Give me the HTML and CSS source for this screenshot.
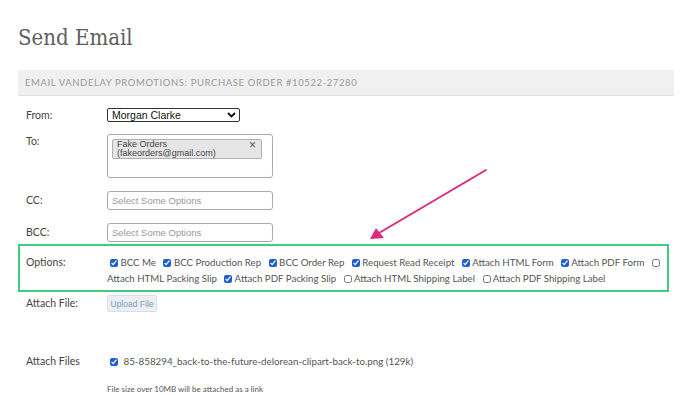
FILE: index.html
```html
<!DOCTYPE html>
<html lang="en">
<head>
    <meta charset="UTF-8">
    <meta name="viewport" content="width=device-width, initial-scale=1.0">
    <title>Send Email</title>
    <link rel="stylesheet" href="styles.css">
</head>
<body>
    <h1 class="page-title">Send Email</h1>
    <div class="panel-head">Email Vandelay Promotions: Purchase Order #10522-27280</div>

    <form class="email-form">
        <div class="row row-from">
            <label class="row-label">From:</label>
            <div class="fake-select">
                <span>Morgan Clarke</span>
                <svg width="9" height="6" viewBox="0 0 9 6"><path d="M1 1 L4.5 4.5 L8 1" fill="none" stroke="#111" stroke-width="1.8"/></svg>
            </div>
        </div>

        <div class="row row-to">
            <label class="row-label">To:</label>
            <div class="multi-box">
                <div class="tag">
                    <span>Fake Orders<br>(fakeorders@gmail.com)</span>
                    <span class="tag-x">&times;</span>
                </div>
            </div>
        </div>

        <div class="row row-cc">
            <label class="row-label">CC:</label>
            <input type="text" class="multi-input" placeholder="Select Some Options">
        </div>

        <div class="row row-bcc">
            <label class="row-label">BCC:</label>
            <input type="text" class="multi-input" placeholder="Select Some Options">
        </div>

        <div class="row row-options">
            <label class="row-label">Options:</label>
            <div class="option-list">
                <label class="opt"><input type="checkbox" checked> BCC Me</label>
                <label class="opt"><input type="checkbox" checked> BCC Production Rep</label>
                <label class="opt"><input type="checkbox" checked> BCC Order Rep</label>
                <label class="opt"><input type="checkbox" checked> Request Read Receipt</label>
                <label class="opt"><input type="checkbox" checked> Attach HTML Form</label>
                <label class="opt"><input type="checkbox" checked> Attach PDF Form</label>
                <label class="opt"><input type="checkbox"> Attach HTML Packing Slip</label>
                <label class="opt"><input type="checkbox" checked> Attach PDF Packing Slip</label>
                <label class="opt"><input type="checkbox"> Attach HTML Shipping Label</label>
                <label class="opt"><input type="checkbox"> Attach PDF Shipping Label</label>
            </div>
        </div>

        <div class="row row-upload">
            <label class="row-label">Attach File:</label>
            <div><button type="button" class="upload-btn">Upload File</button></div>
        </div>

        <div class="row row-files">
            <label class="row-label">Attach Files</label>
            <label class="file-item"><input type="checkbox" checked> 85-858294_back-to-the-future-delorean-clipart-back-to.png (129k)</label>
        </div>

        <div class="row row-note">
            <span></span>
            <p class="note">File size over 10MB will be attached as a link</p>
        </div>
    </form>

    <svg class="pointer-arrow" width="688" height="395" viewBox="0 0 688 395">
        <line x1="486" y1="170" x2="379" y2="233" stroke="#dc2a7e" stroke-width="2" stroke-linecap="round"/>
        <polygon points="370,239 376,228 384,238" fill="#dc2a7e"/>
    </svg>
</body>
</html>
```

FILE: styles.css
```css
body {
    margin: 0;
    padding: 0 14px 0 18px;
    font-family: Lato, 'Open Sans', sans-serif;
    color: #555;
    background: #fff;
    position: relative;
    height: 395px;
    overflow: hidden;
}
.page-title {
    margin: 24px 0 18px;
    height: 28px;
    font-family: 'DejaVu Serif Condensed', 'DejaVu Serif', serif;
    font-weight: normal;
    font-size: 22px;
    line-height: 28px;
    color: #5e5e5e;
}
.panel-head {
    height: 25px;
    line-height: 25px;
    padding: 0 7px;
    background: #f0f0f0;
    border-bottom: 1px solid #e2e2e2;
    text-transform: uppercase;
    font-size: 9.5px;
    letter-spacing: 0.6px;
    color: #999;
}
.row {
    display: grid;
    grid-template-columns: 81px 1fr;
    padding-left: 8px;
    align-items: start;
}
.row-label {
    font-size: 10.5px;
    color: #444;
}
.row-from { margin-top: 12px; }
.row-from .row-label { line-height: 14px; }
.fake-select {
    width: 124px;
    height: 12px;
    border: 1px solid #333;
    border-radius: 2px;
    display: flex;
    align-items: center;
    justify-content: space-between;
    padding: 0 3px 0 4px;
    font-family: 'Liberation Sans', Arial, sans-serif;
    font-size: 10.5px;
    color: #111;
}
.row-to { margin-top: 12px; }
.row-to .row-label { line-height: 14px; }
.multi-box {
    width: 156px;
    height: 34px;
    border: 1px solid #aaa;
    border-radius: 3px;
    padding: 4px;
}
.tag {
    width: 139px;
    height: 18px;
    padding: 0 5px 0 4px;
    background: #e6e6e6;
    border: 1px solid #b0b0b0;
    border-radius: 2px;
    display: flex;
    justify-content: space-between;
    align-items: flex-start;
    font-family: 'Liberation Sans', Arial, sans-serif;
    font-size: 9px;
    line-height: 9px;
    color: #444;
}
.tag-x {
    font-size: 12px;
    line-height: 9px;
    color: #555;
    padding-top: 1px;
}
.row-cc { margin-top: 13px; }
.row-bcc { margin-top: 13px; }
.row-cc .row-label, .row-bcc .row-label { line-height: 19px; }
.multi-input {
    width: 166px;
    height: 19px;
    box-sizing: border-box;
    border: 1px solid #aaa;
    border-radius: 3px;
    padding: 0 4px;
    font-family: 'Liberation Sans', Arial, sans-serif;
    font-size: 9.5px;
    outline: none;
}
.multi-input::placeholder { color: #999; }
.row-options {
    margin: 2px 5px 0 0;
    border: 2px solid #3ccd80;
    padding: 8px 2px 4px 6px;
}
.row-options .row-label { line-height: 16px; }
.option-list {
    font-size: 9.7px;
    line-height: 16px;
    color: #555;
}
.opt {
    margin-right: 5px;
}
input[type="checkbox"] {
    width: 8px;
    height: 8px;
    margin: 0;
    vertical-align: -1px;
    accent-color: #1d5fd0;
}
.opt:first-child input[type="checkbox"] {
    margin-left: 3px;
}
.row-upload { margin-top: 3px; }
.row-upload .row-label { line-height: 15px; padding-top: 1px; }
.upload-btn {
    display: block;
    height: 17px;
    width: 50px;
    padding: 0;
    background: #eaf0f4;
    border: 1px solid #d8e0e6;
    border-radius: 2px;
    font-family: 'Liberation Sans', Arial, sans-serif;
    font-size: 8.5px;
    color: #7f9cb6;
}
.row-files { margin-top: 42px; }
.row-files .row-label { line-height: 14px; }
.file-item {
    font-size: 9.8px;
    line-height: 14px;
    color: #555;
}
.file-item input[type="checkbox"] {
    margin: 0 3px 0 3px;
}
.row-note { margin-top: 15px; }
.note {
    margin: 0;
    font-size: 8px;
    line-height: 12px;
    color: #555;
}
.pointer-arrow {
    position: absolute;
    top: 0;
    left: 0;
    pointer-events: none;
}
```
